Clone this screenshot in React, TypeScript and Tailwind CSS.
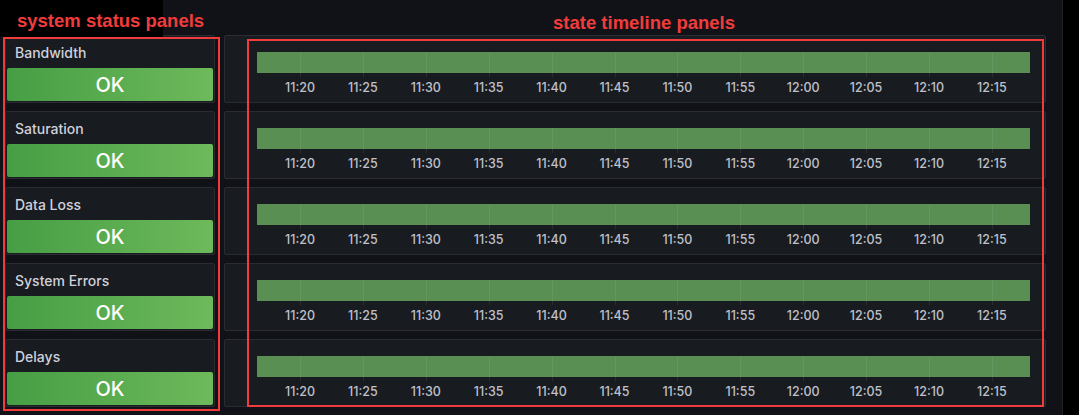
import React from "react";

const statusPanels = ["Bandwidth", "Saturation", "Data Loss", "System Errors", "Delays"];
const ticks = ["11:20", "11:25", "11:30", "11:35", "11:40", "11:45", "11:50", "11:55", "12:00", "12:05", "12:10", "12:15"];

// bar is 773px wide, first tick 43px in, ticks every ~62.9px
const tickLeft = (i: number) => 43 + i * 62.9;

const StatusPanel: React.FC<{ title: string }> = ({ title }) => (
  <div className="h-[68px] rounded-[2px] border border-[#2a2c31] bg-[#181b1f] flex flex-col">
    <div className="h-[32px] pl-[9px] flex items-center text-[14px] font-medium text-[#d0d1dc]">
      {title}
    </div>
    <div className="mx-px mb-px flex-1 rounded-[2px] bg-gradient-to-r from-[#469e44] to-[#6db95b] flex items-center justify-center text-[20px] font-medium text-white">
      OK
    </div>
  </div>
);

const TimelinePanel: React.FC = () => (
  <div className="h-[68px] rounded-[2px] border border-[#2a2c31] bg-[#181b1f] pt-[16px] pl-[32px] pr-[15px]">
    <div className="relative h-[21px] bg-[#5a8f54]">
      {ticks.map((t, i) => (
        <div
          key={t}
          className="absolute top-0 h-[25px] w-px bg-[#ccccdc]/10"
          style={{ left: tickLeft(i) }}
        />
      ))}
    </div>
    <div className="relative h-[28px]">
      {ticks.map((t, i) => (
        <span
          key={t}
          className="absolute top-[6px] -translate-x-1/2 text-[12.5px] font-medium text-[#bfc0ca]"
          style={{ left: tickLeft(i) }}
        >
          {t}
        </span>
      ))}
    </div>
  </div>
);

export default function App() {
  return (
    <div
      className="relative flex h-[415px] w-[1079px] bg-black overflow-hidden"
      style={{ fontFamily: "Inter, 'Noto Sans', sans-serif" }}
    >
      <div className="w-[1063px] border-r border-[#202226] bg-[#111217] flex flex-col">
        <div className="relative h-[35px] shrink-0">
          <div className="absolute left-0 top-0 h-[37px] w-[163px] bg-black" />
          <span className="absolute left-[17px] top-[7px] text-[18.5px] font-bold text-[#f03c3c] [font-family:'Liberation_Sans',Arial,sans-serif]">
            system status panels
          </span>
          <span className="absolute left-[553px] top-[9px] text-[18.5px] font-bold text-[#f03c3c] [font-family:'Liberation_Sans',Arial,sans-serif]">
            state timeline panels
          </span>
        </div>
        <div className="flex gap-[9px] pl-[5px]">
          <div className="w-[210px] flex flex-col gap-[8px]">
            {statusPanels.map((p) => (
              <StatusPanel key={p} title={p} />
            ))}
          </div>
          <div className="w-[822px] flex flex-col gap-[8px]">
            {statusPanels.map((p) => (
              <TimelinePanel key={p} />
            ))}
          </div>
        </div>
      </div>

      {/* annotation outlines */}
      <div className="pointer-events-none absolute left-[3px] top-[37px] h-[374px] w-[217px] border-2 border-[#f03c3c]" />
      <div className="pointer-events-none absolute left-[247px] top-[39px] h-[368px] w-[797px] border-2 border-[#f03c3c]" />
    </div>
  );
}
